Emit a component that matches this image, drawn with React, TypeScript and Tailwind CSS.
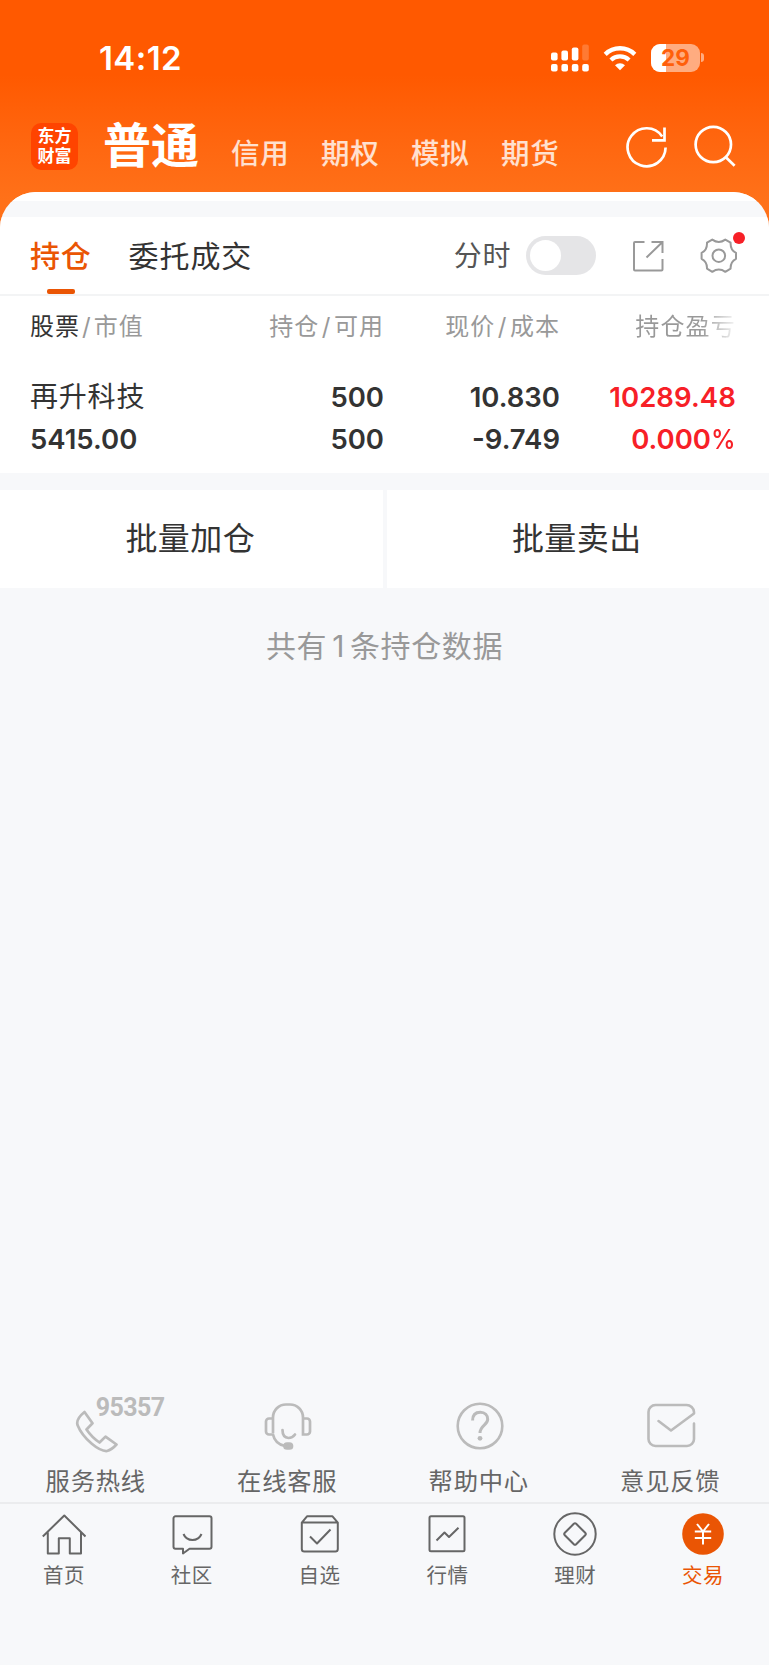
import type { ReactNode } from "react";

const accounts = ["信用", "期权", "模拟", "期货"];

const services = [
  { label: "服务热线", icon: <PhoneIcon /> },
  { label: "在线客服", icon: <HeadsetIcon /> },
  { label: "帮助中心", icon: <HelpIcon /> },
  { label: "意见反馈", icon: <MailIcon /> },
];

const tabs = [
  { label: "首页", icon: <HomeIcon /> },
  { label: "社区", icon: <ChatIcon /> },
  { label: "自选", icon: <PickIcon /> },
  { label: "行情", icon: <MarketIcon /> },
  { label: "理财", icon: <WealthIcon /> },
  { label: "交易", icon: <TradeIcon />, active: true },
];

function StatusBar() {
  return (
    <div className="flex h-[115px] items-center justify-between pl-[99px] pr-[65px] text-white">
      <span className="mt-px text-[33px] font-semibold leading-none tracking-[0.4px]">14:12</span>
      <div className="flex items-center">
        <svg width="38" height="28" viewBox="0 0 38 28" fill="white">
          <rect x="0" y="8.5" width="6.6" height="8" rx="2" />
          <rect x="10.4" y="6.5" width="6.6" height="10" rx="2" />
          <rect x="20.8" y="3.5" width="6.6" height="13" rx="2" />
          <rect x="31.2" y="0.5" width="6.6" height="16" rx="2" opacity="0.2" />
          <rect x="0" y="20" width="6.6" height="7.5" rx="2" />
          <rect x="10.4" y="20" width="6.6" height="7.5" rx="2" />
          <rect x="20.8" y="20" width="6.6" height="7.5" rx="2" />
          <rect x="31.2" y="20" width="6.6" height="7.5" rx="2" />
        </svg>
        <svg className="ml-[14px]" width="34" height="26" viewBox="0 0 34 26">
          <path d="M2.2 9.3a21.2 21.2 0 0 1 29.6 0" fill="none" stroke="white" strokeWidth="4.4" />
          <path d="M7.9 15a13.2 13.2 0 0 1 18.2 0" fill="none" stroke="white" strokeWidth="4.2" />
          <path d="M17 25.3l-5-5.1a7.4 7.4 0 0 1 10 0z" fill="white" />
        </svg>
        <div className="relative ml-[14px] flex h-[28px] w-[49px] items-center justify-center overflow-hidden rounded-[9px] bg-white/50">
          <div className="absolute left-0 top-0 h-full w-[15px] bg-white" />
          <span className="relative pt-px text-[22.5px] font-bold leading-none text-[#ff5f0a]">29</span>
        </div>
        <div className="ml-[1px] h-[9px] w-[3px] rounded-r-full bg-white/50" />
      </div>
    </div>
  );
}

function Header() {
  return (
    <div className="flex h-[77px] items-start pl-[31px] pr-[33px] text-white">
      <div className="mt-[8px] flex h-[47px] w-[47px] flex-col items-center justify-center rounded-[10px] bg-[#ff4400] text-[17px] font-bold leading-[19.5px]">
        <span>东方</span>
        <span>财富</span>
      </div>
      <span className="ml-[25px] mt-[7px] text-[48px] font-bold leading-[48px]">普通</span>
      <div className="ml-[32px] mt-[24px] flex gap-[31.4px] text-white/80">
        {accounts.map((a) => (
          <span key={a} className="text-[28.5px] font-medium leading-[30px] tracking-[0.8px]">
            {a}
          </span>
        ))}
      </div>
      <svg className="ml-auto mt-[10px]" width="42" height="44" viewBox="0 0 42 44" fill="none" stroke="white" strokeWidth="2.7">
        <path d="M39.6 22.6A19 19 0 1 1 36.2 11.4" />
        <path d="M38.5 2.5v12.8H26" />
      </svg>
      <svg className="ml-[26px] mt-[10px]" width="42" height="44" viewBox="0 0 42 44" fill="none" stroke="white" strokeWidth="2.7">
        <circle cx="19.3" cy="19.5" r="17.7" />
        <path d="M31.6 32l9 8.8" />
      </svg>
    </div>
  );
}

function Toolbar() {
  return (
    <div className="flex h-[79px] items-start border-b-2 border-[#f3f4f5] pl-[30px] pr-[31px]">
      <div className="flex flex-col items-center">
        <span className="mt-[23px] text-[30px] font-medium leading-[32px] tracking-[0.8px] text-[#ea5504]">持仓</span>
        <div className="mt-[17px] h-[5px] w-[28px] rounded-[2px] bg-[#ea5504]" />
      </div>
      <span className="ml-[37px] mt-[23px] text-[30px] leading-[32px] tracking-[0.9px] text-[#333]">委托成交</span>
      <span className="ml-auto mt-[24px] text-[28px] leading-[31px] tracking-[0.6px] text-[#555]">分时</span>
      <div className="ml-[15px] mt-[19px] h-[39px] w-[70px] rounded-full bg-[#e5e5e7] p-[4px]">
        <div className="h-[31px] w-[31px] rounded-full bg-white" />
      </div>
      <svg className="ml-[36px] mt-[23px]" width="32" height="32" viewBox="0 0 32 32" fill="none" stroke="#999" strokeWidth="2">
        <path d="M12.5 2H3a1 1 0 0 0-1 1v26.5a1 1 0 0 0 1 1h26.5a1 1 0 0 0 1-1V19" />
        <path d="M19.5 2H30.5V13M30.5 2L14.5 17.5" />
      </svg>
      <div className="relative ml-[36px] mt-[20px]">
        <svg width="38" height="38" viewBox="0 0 38 38" fill="none" stroke="#999" strokeWidth="2" strokeLinejoin="round">
          <path d="M12.3 2.6Q18.8 7.2 25.3 2.6L30.6 5.7Q30.3 13.2 36 15.8V21.8Q30.3 24.8 30.6 31.6L25.3 34.8Q18.8 30.4 12.3 34.8L7 31.6Q7.3 24.8 1.6 21.8V15.8Q7.3 13.2 7 5.7Z" />
          <circle cx="18.8" cy="18.7" r="6.3" />
        </svg>
        <span className="absolute -right-[7px] -top-[5px] h-[12px] w-[12px] rounded-full bg-[#f72027]" />
      </div>
    </div>
  );
}

function Cell({ top, bottom, className = "" }: { top: ReactNode; bottom: ReactNode; className?: string }) {
  return (
    <div className={`flex flex-col text-right text-[27.5px] font-semibold leading-[42px] ${className}`}>
      <span>{top}</span>
      <span>{bottom}</span>
    </div>
  );
}

function Holdings() {
  return (
    <div className="h-[177px] pl-[30px] text-[#333]">
      <div className="grid grid-cols-[170px_184px_176px_176px] pt-[17px] text-[24px] leading-[28px] tracking-[1px] text-[#999]">
        <span className="whitespace-nowrap">
          <span className="text-[#333]">股票</span>
          <span className="mx-[2px]">/</span>市值
        </span>
        <span className="text-right">持仓<span className="mx-[2.5px]">/</span>可用</span>
        <span className="text-right">现价<span className="mx-[2.5px]">/</span>成本</span>
        <span className="bg-linear-to-r from-[#999] from-80% to-[#999]/10 bg-clip-text text-right tracking-[1.2px] text-transparent">持仓盈亏</span>
      </div>
      <div className="mt-[35px] grid grid-cols-[170px_184px_176px_176px]">
        <Cell
          className="!text-left"
          top={<span className="text-[28px] font-normal tracking-[0.8px]">再升科技</span>}
          bottom="5415.00"
        />
        <Cell top="500" bottom="500" />
        <Cell top="10.830" bottom="-9.749" />
        <Cell
          className="text-[#f72027]"
          top={<span className="tracking-[0.1px]">10289.48</span>}
          bottom={<span>0.000<span className="inline-block w-[25px] origin-left scale-x-90 font-medium">%</span></span>}
        />
      </div>
    </div>
  );
}

function PhoneIcon() {
  return (
    <div className="relative h-[60px] w-[96px]">
      <svg className="absolute left-[26px] top-[12px]" width="44" height="44" viewBox="0 0 44 44" fill="none" stroke="#bbb" strokeWidth="2.7" strokeLinejoin="round">
        <path d="M9.5 2L17.5 13.3L11.5 19.5Q17 27.5 24.5 32.5L30.5 26.6L41.5 34.5Q36.5 40 32 41Q26 41.5 16.5 33.5Q6.5 25 2.5 15Q.8 9 9.5 2Z" />
      </svg>
      <span className="absolute left-[47px] top-0 font-['Roboto'] text-[25px] font-bold leading-[20px] tracking-[-0.6px] text-[#bbb]">95357</span>
    </div>
  );
}

function HeadsetIcon() {
  return (
    <svg className="mt-[4px]" width="50" height="50" viewBox="0 0 50 50" fill="none" stroke="#bbb" strokeWidth="2.7">
      <path d="M10 31V15.5A13 13 0 0 1 23 2.5H27A13 13 0 0 1 40 15.5V32.5H44A3 3 0 0 0 47 29.5V19.5A3 3 0 0 0 44 16.5H40" />
      <path d="M10 16.5H6A3 3 0 0 0 3 19.5V29.5A3 3 0 0 0 6 32.5H10Q12 42 22 44" />
      <path d="M19.5 28Q19.5 35.5 25.5 36Q29.5 36 32 32.5" strokeLinecap="round" />
      <rect x="21.5" y="41.5" width="7.5" height="5" rx="2.5" fill="#bbb" />
    </svg>
  );
}

function HelpIcon() {
  return (
    <svg className="mt-[3px]" width="50" height="50" viewBox="0 0 50 50" fill="none" stroke="#bbb" strokeWidth="2.6">
      <circle cx="25" cy="25" r="22.3" />
      <path d="M17.6 19.5C17.6 14 20.5 11.3 25.3 11.3C30 11.3 32.7 14.5 32.7 18.3C32.7 24 25 24.5 25 32" strokeWidth="3" />
      <circle cx="25" cy="37.3" r="2.4" fill="#bbb" stroke="none" />
    </svg>
  );
}

function MailIcon() {
  return (
    <svg className="mt-[4px]" width="50" height="50" viewBox="0 0 50 50" fill="none" stroke="#bbb" strokeWidth="2.6" strokeLinecap="round" strokeLinejoin="round">
      <path d="M12.5 19L25 28.5L48 11.5V10A7.5 7.5 0 0 0 40.5 3H9.5A7 7 0 0 0 2.5 10V37A7 7 0 0 0 9.5 44H41A7 7 0 0 0 48 37V21.5" />
    </svg>
  );
}

function TabSvg({ children }: { children: ReactNode }) {
  return (
    <svg width="44" height="44" viewBox="0 0 44 44" fill="none" stroke="#666" strokeWidth="2" strokeLinejoin="round">
      {children}
    </svg>
  );
}

function HomeIcon() {
  return (
    <TabSvg>
      <path d="M.8 24.5L22.3 3.5L43.5 24.5M5.8 20.5V41.5H16.8V26.3H27.8V41.5H39V20.5" />
    </TabSvg>
  );
}

function ChatIcon() {
  return (
    <TabSvg>
      <path d="M5.5 4.3H39.5A2 2 0 0 1 41.5 6.3V34.8A2 2 0 0 1 39.5 36.8H19.5L13 41.5V36.8H5.5A2 2 0 0 1 3.5 34.8V6.3A2 2 0 0 1 5.5 4.3Z" />
      <path d="M13.5 22Q16 28 22.5 28Q29 28 31.5 22" />
    </TabSvg>
  );
}

function PickIcon() {
  return (
    <TabSvg>
      <path d="M9 4.3H34.5L39.8 10.6V37A2.5 2.5 0 0 1 37.3 39.5H6.3A2.5 2.5 0 0 1 3.8 37V10.6ZM3.8 10.6H39.8" />
      <path d="M12 24.5L19 31.5L32.5 17.5" />
    </TabSvg>
  );
}

function MarketIcon() {
  return (
    <TabSvg>
      <rect x="4.5" y="4.3" width="35" height="35" rx="1.5" />
      <path d="M11.5 28.5L19.5 20.5L24 25L33.5 15.8" />
    </TabSvg>
  );
}

function WealthIcon() {
  return (
    <TabSvg>
      <circle cx="22" cy="22" r="20.7" />
      <path d="M20.8 11.8L11.8 20.8Q10.6 22 11.8 23.2L20.8 32.2Q22 33.4 23.2 32.2L32.2 23.2Q33.4 22 32.2 20.8L23.2 11.8Q22 10.6 20.8 11.8Z" />
    </TabSvg>
  );
}

function TradeIcon() {
  return (
    <svg width="44" height="44" viewBox="0 0 44 44" fill="none" stroke="white" strokeWidth="2">
      <circle cx="22" cy="22" r="20.8" fill="#ea5504" stroke="none" />
      <path d="M16 12L22 19.5L28 12M22 19.5V32.5M13.8 19.5H30.2M13.8 26H30.2" />
    </svg>
  );
}

export default function App() {
  return (
    <div className="flex h-[1665px] w-[769px] flex-col overflow-hidden bg-linear-to-b from-[#ff5900] from-[75px] to-[#ff7119] to-[200px] font-['Inter','Noto_Sans_CJK_SC',sans-serif]">
      <StatusBar />
      <Header />
      <div className="flex flex-1 flex-col overflow-hidden rounded-t-[36px] bg-[#f7f8fa]">
        <div className="h-[9px] bg-white" />
        <div className="mt-[16px] bg-white">
          <Toolbar />
          <Holdings />
        </div>
        <div className="mt-[17px] flex h-[98px] gap-[4px] text-[32px] leading-[98px] tracking-[0.4px] text-[#333]">
          <button className="flex-1 bg-white pr-[2px]">批量加仓</button>
          <button className="flex-1 bg-white pr-[2px]">批量卖出</button>
        </div>
        <p className="mt-[38px] text-center text-[30px] leading-[40px] tracking-[0.6px] text-[#999]">
          共有<span className="mx-[5px]">1</span>条持仓数据
        </p>
        <div className="mt-auto flex pr-[3px]">
          {services.map((s) => (
            <div key={s.label} className="flex flex-1 flex-col items-center">
              <div className="h-[68px] pl-[2px]">{s.icon}</div>
              <span className="text-[24.3px] leading-[30px] tracking-[0.8px] text-[#666]">{s.label}</span>
            </div>
          ))}
        </div>
        <div className="mt-[6px] flex h-[163px] border-t-2 border-[#ebecee] pr-[2px] pt-[8px]">
          {tabs.map((t) => (
            <div key={t.label} className="flex flex-1 flex-col items-center">
              {t.icon}
              <span className={`mt-[7px] text-[20.5px] leading-[26px] tracking-[0.5px] ${t.active ? "text-[#ea5504]" : "text-[#666]"}`}>
                {t.label}
              </span>
            </div>
          ))}
        </div>
      </div>
    </div>
  );
}
